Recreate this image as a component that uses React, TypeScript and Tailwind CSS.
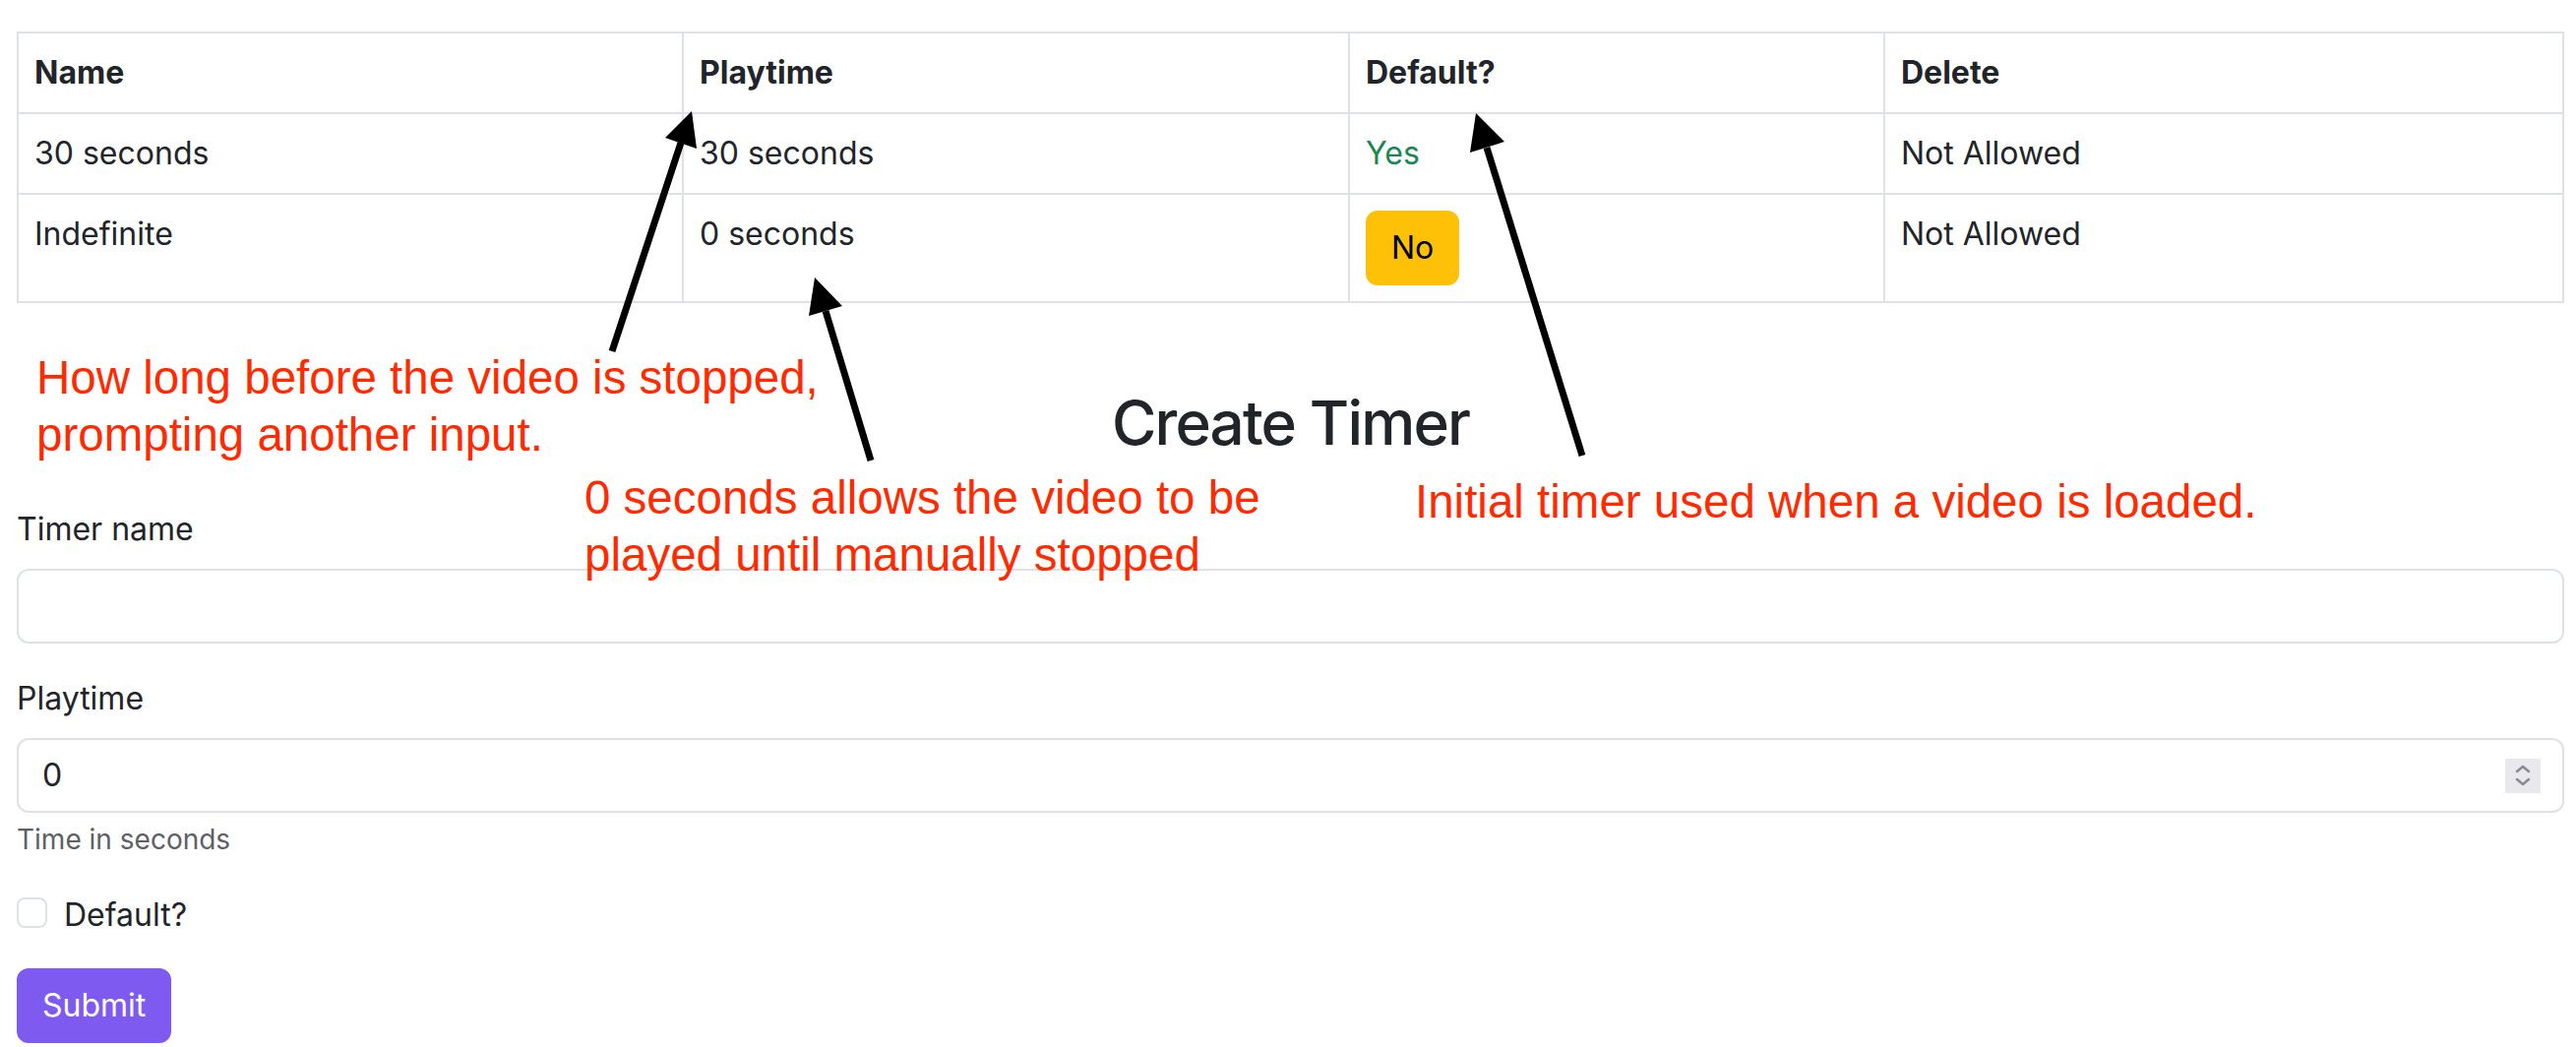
import React from 'react';

const timers = [
  { name: '30 seconds', playtime: '30 seconds', isDefault: true },
  { name: 'Indefinite', playtime: '0 seconds', isDefault: false },
];

// arrows drawn over the page: tail -> tip, with the two head corners
const arrows = [
  { tail: [622, 357], base: [692, 145], head: '703,113 676,140 708,151' },
  { tail: [885, 468], base: [839, 316], head: '828,282 822,321 856,311' },
  { tail: [1608, 463], base: [1511, 150], head: '1500,115 1494,155 1529,144' },
];

const cell = 'border-2 border-[#dee2e6] px-[16px] py-[16px] align-top text-left';

const App: React.FC = () => {
  return (
    <div className="relative min-h-screen bg-white text-[#212529] font-['Inter','Noto_Sans',sans-serif] text-[32px] leading-[48px] overflow-hidden">
      <div className="ml-[17px] w-[2589px] pt-[32px]">
        <table className="w-full border-collapse">
          <thead>
            <tr>
              <th className={`${cell} w-[676px] font-bold`}>Name</th>
              <th className={`${cell} w-[677px] font-bold`}>Playtime</th>
              <th className={`${cell} w-[544px] font-bold`}>Default?</th>
              <th className={`${cell} font-bold`}>Delete</th>
            </tr>
          </thead>
          <tbody>
            {timers.map((t) => (
              <tr key={t.name}>
                <td className={cell}>{t.name}</td>
                <td className={cell}>{t.playtime}</td>
                <td className={cell}>
                  {t.isDefault ? (
                    <span className="text-[#198754]">Yes</span>
                  ) : (
                    <button className="bg-[#ffc107] text-black border-2 border-[#ffc107] rounded-[12px] px-[24px] py-[12px] leading-[48px]">
                      No
                    </button>
                  )}
                </td>
                <td className={cell}>Not Allowed</td>
              </tr>
            ))}
          </tbody>
        </table>

        <h2 className="mt-[84px] text-center text-[62px] leading-[76px] font-medium tracking-[-0.03em]">Create Timer</h2>

        <form className="mt-[46px]">
          <label className="block mb-[16px]">Timer name</label>
          <input
            type="text"
            className="block w-full h-[76px] border-2 border-[#dee2e6] rounded-[12px] px-[24px] py-[12px] outline-none"
          />

          <label className="block mt-[32px] mb-[16px]">Playtime</label>
          <div className="flex items-center w-full h-[76px] border-2 border-[#dee2e6] rounded-[12px] pl-[24px] pr-[22px]">
            <input type="text" defaultValue="0" className="flex-1 outline-none bg-transparent" />
            <div className="flex flex-col items-center justify-center w-[36px] h-[35px] bg-[#e9e8ed]">
              <svg width="20" height="30" viewBox="0 0 20 30" fill="none" stroke="#8a8a95" strokeWidth="2.5" strokeLinecap="round" strokeLinejoin="round">
                <path d="M4 11 L10 6 L16 11" />
                <path d="M4 19 L10 24 L16 19" />
              </svg>
            </div>
          </div>
          <div className="mt-[6px] text-[28px] leading-[42px] text-[#5d6064]">Time in seconds</div>

          <div className="mt-[32px] flex items-start h-[48px]">
            <span className="mt-[6px] w-[31px] h-[31px] border-2 border-[#dee2e6] rounded-[8px] bg-white" />
            <span className="ml-[17px]">Default?</span>
          </div>

          <button
            type="button"
            className="mt-[30px] bg-[#7f5af0] text-white border-2 border-[#7f5af0] rounded-[12px] px-[24px] py-[12px] leading-[48px]"
          >
            Submit
          </button>
        </form>
      </div>

      {/* annotations */}
      <div className="absolute left-[37px] top-[355px] text-[#ff2a00] font-['Liberation_Sans',Arial,sans-serif] text-[47.5px] leading-[58px] whitespace-nowrap">
        How long before the video is stopped,
        <br />
        prompting another input.
      </div>
      <div className="absolute left-[594px] top-[477px] text-[#ff2a00] font-['Liberation_Sans',Arial,sans-serif] text-[47.5px] leading-[58px] whitespace-nowrap">
        0 seconds allows the video to be
        <br />
        played until manually stopped
      </div>
      <div className="absolute left-[1438px] top-[481px] text-[#ff2a00] font-['Liberation_Sans',Arial,sans-serif] text-[47.5px] leading-[58px] whitespace-nowrap">
        Initial timer used when a video is loaded.
      </div>

      <svg className="absolute left-0 top-0 pointer-events-none" width="2618" height="1064" viewBox="0 0 2618 1064">
        {arrows.map((a, i) => (
          <g key={i}>
            <line x1={a.tail[0]} y1={a.tail[1]} x2={a.base[0]} y2={a.base[1]} stroke="black" strokeWidth="7" />
            <polygon points={a.head} fill="black" />
          </g>
        ))}
      </svg>
    </div>
  );
};

export default App;
